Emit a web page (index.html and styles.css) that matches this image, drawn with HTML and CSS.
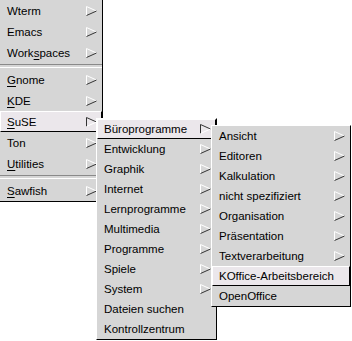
FILE: index.html
```html
<!DOCTYPE html>
<html lang="de">
<head>
  <meta charset="UTF-8" />
  <title>Sawfish Menü</title>
  <link rel="stylesheet" href="styles.css">
</head>
<body>

  <svg class="defs" width="0" height="0">
    <symbol id="arr" viewBox="0 0 11 10">
      <polyline points="0.5,9.5 0.5,0.5 10.5,5" fill="none" stroke="#fff" />
      <line x1="0.5" y1="9.5" x2="10.5" y2="5" stroke="#333" />
    </symbol>
    <symbol id="arr-in" viewBox="0 0 11 10">
      <polyline points="0.5,9.5 0.5,0.5 10.5,5" fill="none" stroke="#333" />
      <line x1="0.5" y1="9.5" x2="10.5" y2="5" stroke="#fff" />
    </symbol>
  </svg>

  <div class="menu menu-root">
    <div class="item"><span>Wterm</span><svg class="arrow"><use href="#arr"/></svg></div>
    <div class="item"><span>Emacs</span><svg class="arrow"><use href="#arr"/></svg></div>
    <div class="item"><span>Work<u>s</u>paces</span><svg class="arrow"><use href="#arr"/></svg></div>
    <div class="sep"></div>
    <div class="item"><span><u>G</u>nome</span><svg class="arrow"><use href="#arr"/></svg></div>
    <div class="item"><span><u>K</u>DE</span><svg class="arrow"><use href="#arr"/></svg></div>
    <div class="item active"><span><u>S</u>uSE</span><svg class="arrow"><use href="#arr-in"/></svg></div>
    <div class="item"><span>Ton</span><svg class="arrow"><use href="#arr"/></svg></div>
    <div class="item"><span><u>U</u>tilities</span><svg class="arrow"><use href="#arr"/></svg></div>
    <div class="sep"></div>
    <div class="item"><span><u>S</u>awfish</span><svg class="arrow"><use href="#arr"/></svg></div>
  </div>

  <div class="menu menu-suse">
    <div class="item active"><span>Büroprogramme</span><svg class="arrow"><use href="#arr-in"/></svg></div>
    <div class="item"><span>Entwicklung</span><svg class="arrow"><use href="#arr"/></svg></div>
    <div class="item"><span>Graphik</span><svg class="arrow"><use href="#arr"/></svg></div>
    <div class="item"><span>Internet</span><svg class="arrow"><use href="#arr"/></svg></div>
    <div class="item"><span>Lernprogramme</span><svg class="arrow"><use href="#arr"/></svg></div>
    <div class="item"><span>Multimedia</span><svg class="arrow"><use href="#arr"/></svg></div>
    <div class="item"><span>Programme</span><svg class="arrow"><use href="#arr"/></svg></div>
    <div class="item"><span>Spiele</span><svg class="arrow"><use href="#arr"/></svg></div>
    <div class="item"><span>System</span><svg class="arrow"><use href="#arr"/></svg></div>
    <div class="item"><span>Dateien suchen</span></div>
    <div class="item"><span>Kontrollzentrum</span></div>
  </div>

  <div class="menu menu-office">
    <div class="item"><span>Ansicht</span><svg class="arrow"><use href="#arr"/></svg></div>
    <div class="item"><span>Editoren</span><svg class="arrow"><use href="#arr"/></svg></div>
    <div class="item"><span>Kalkulation</span><svg class="arrow"><use href="#arr"/></svg></div>
    <div class="item"><span>nicht spezifiziert</span><svg class="arrow"><use href="#arr"/></svg></div>
    <div class="item"><span>Organisation</span><svg class="arrow"><use href="#arr"/></svg></div>
    <div class="item"><span>Präsentation</span><svg class="arrow"><use href="#arr"/></svg></div>
    <div class="item"><span>Textverarbeitung</span><svg class="arrow"><use href="#arr"/></svg></div>
    <div class="item active"><span>KOffice-Arbeitsbereich</span></div>
    <div class="item"><span>OpenOffice</span></div>
  </div>

</body>
</html>
```

FILE: styles.css
```css
* { box-sizing: border-box; margin: 0; padding: 0; }

html, body {
  width: 352px;
  height: 341px;
  background: #fff;
  overflow: hidden;
  font-family: "Liberation Sans", Arial, sans-serif;
  font-size: 11.5px;
  color: #000;
}

.defs {
  position: absolute;
}

/* popup menus lie over each other */
.menu {
  position: absolute;
  display: flex;
  flex-direction: column;
  background: #d6d6d6;
  border: 1px solid;
  border-color: #fff #000 #000 #fff;
}

.menu-root {
  left: -1px;
  top: -1px;
  width: 104px;
  z-index: 1;
}

.menu-root .item {
  height: 21px;
}

.menu-suse {
  left: 96px;
  top: 118px;
  width: 121px;
  z-index: 2;
}

.menu-office {
  left: 211px;
  top: 125px;
  width: 140px;
  z-index: 3;
}

.item {
  height: 20px;
  display: flex;
  align-items: center;
  justify-content: space-between;
  padding: 0 5px 0 7px;
  white-space: nowrap;
}

.item u {
  text-underline-offset: 2px;
}

.item.active {
  background: #ebe7eb;
  border: 1px solid;
  border-color: #fff #000 #000 #fff;
  padding: 0 4px 0 6px;
}

.arrow {
  width: 11px;
  height: 10px;
  flex: none;
}

.sep {
  height: 6px;
  display: flex;
  flex-direction: column;
  justify-content: center;
}

.sep::before {
  content: "";
  height: 2px;
  border-top: 1px solid #8a8a8a;
  border-bottom: 1px solid #fff;
}
```
